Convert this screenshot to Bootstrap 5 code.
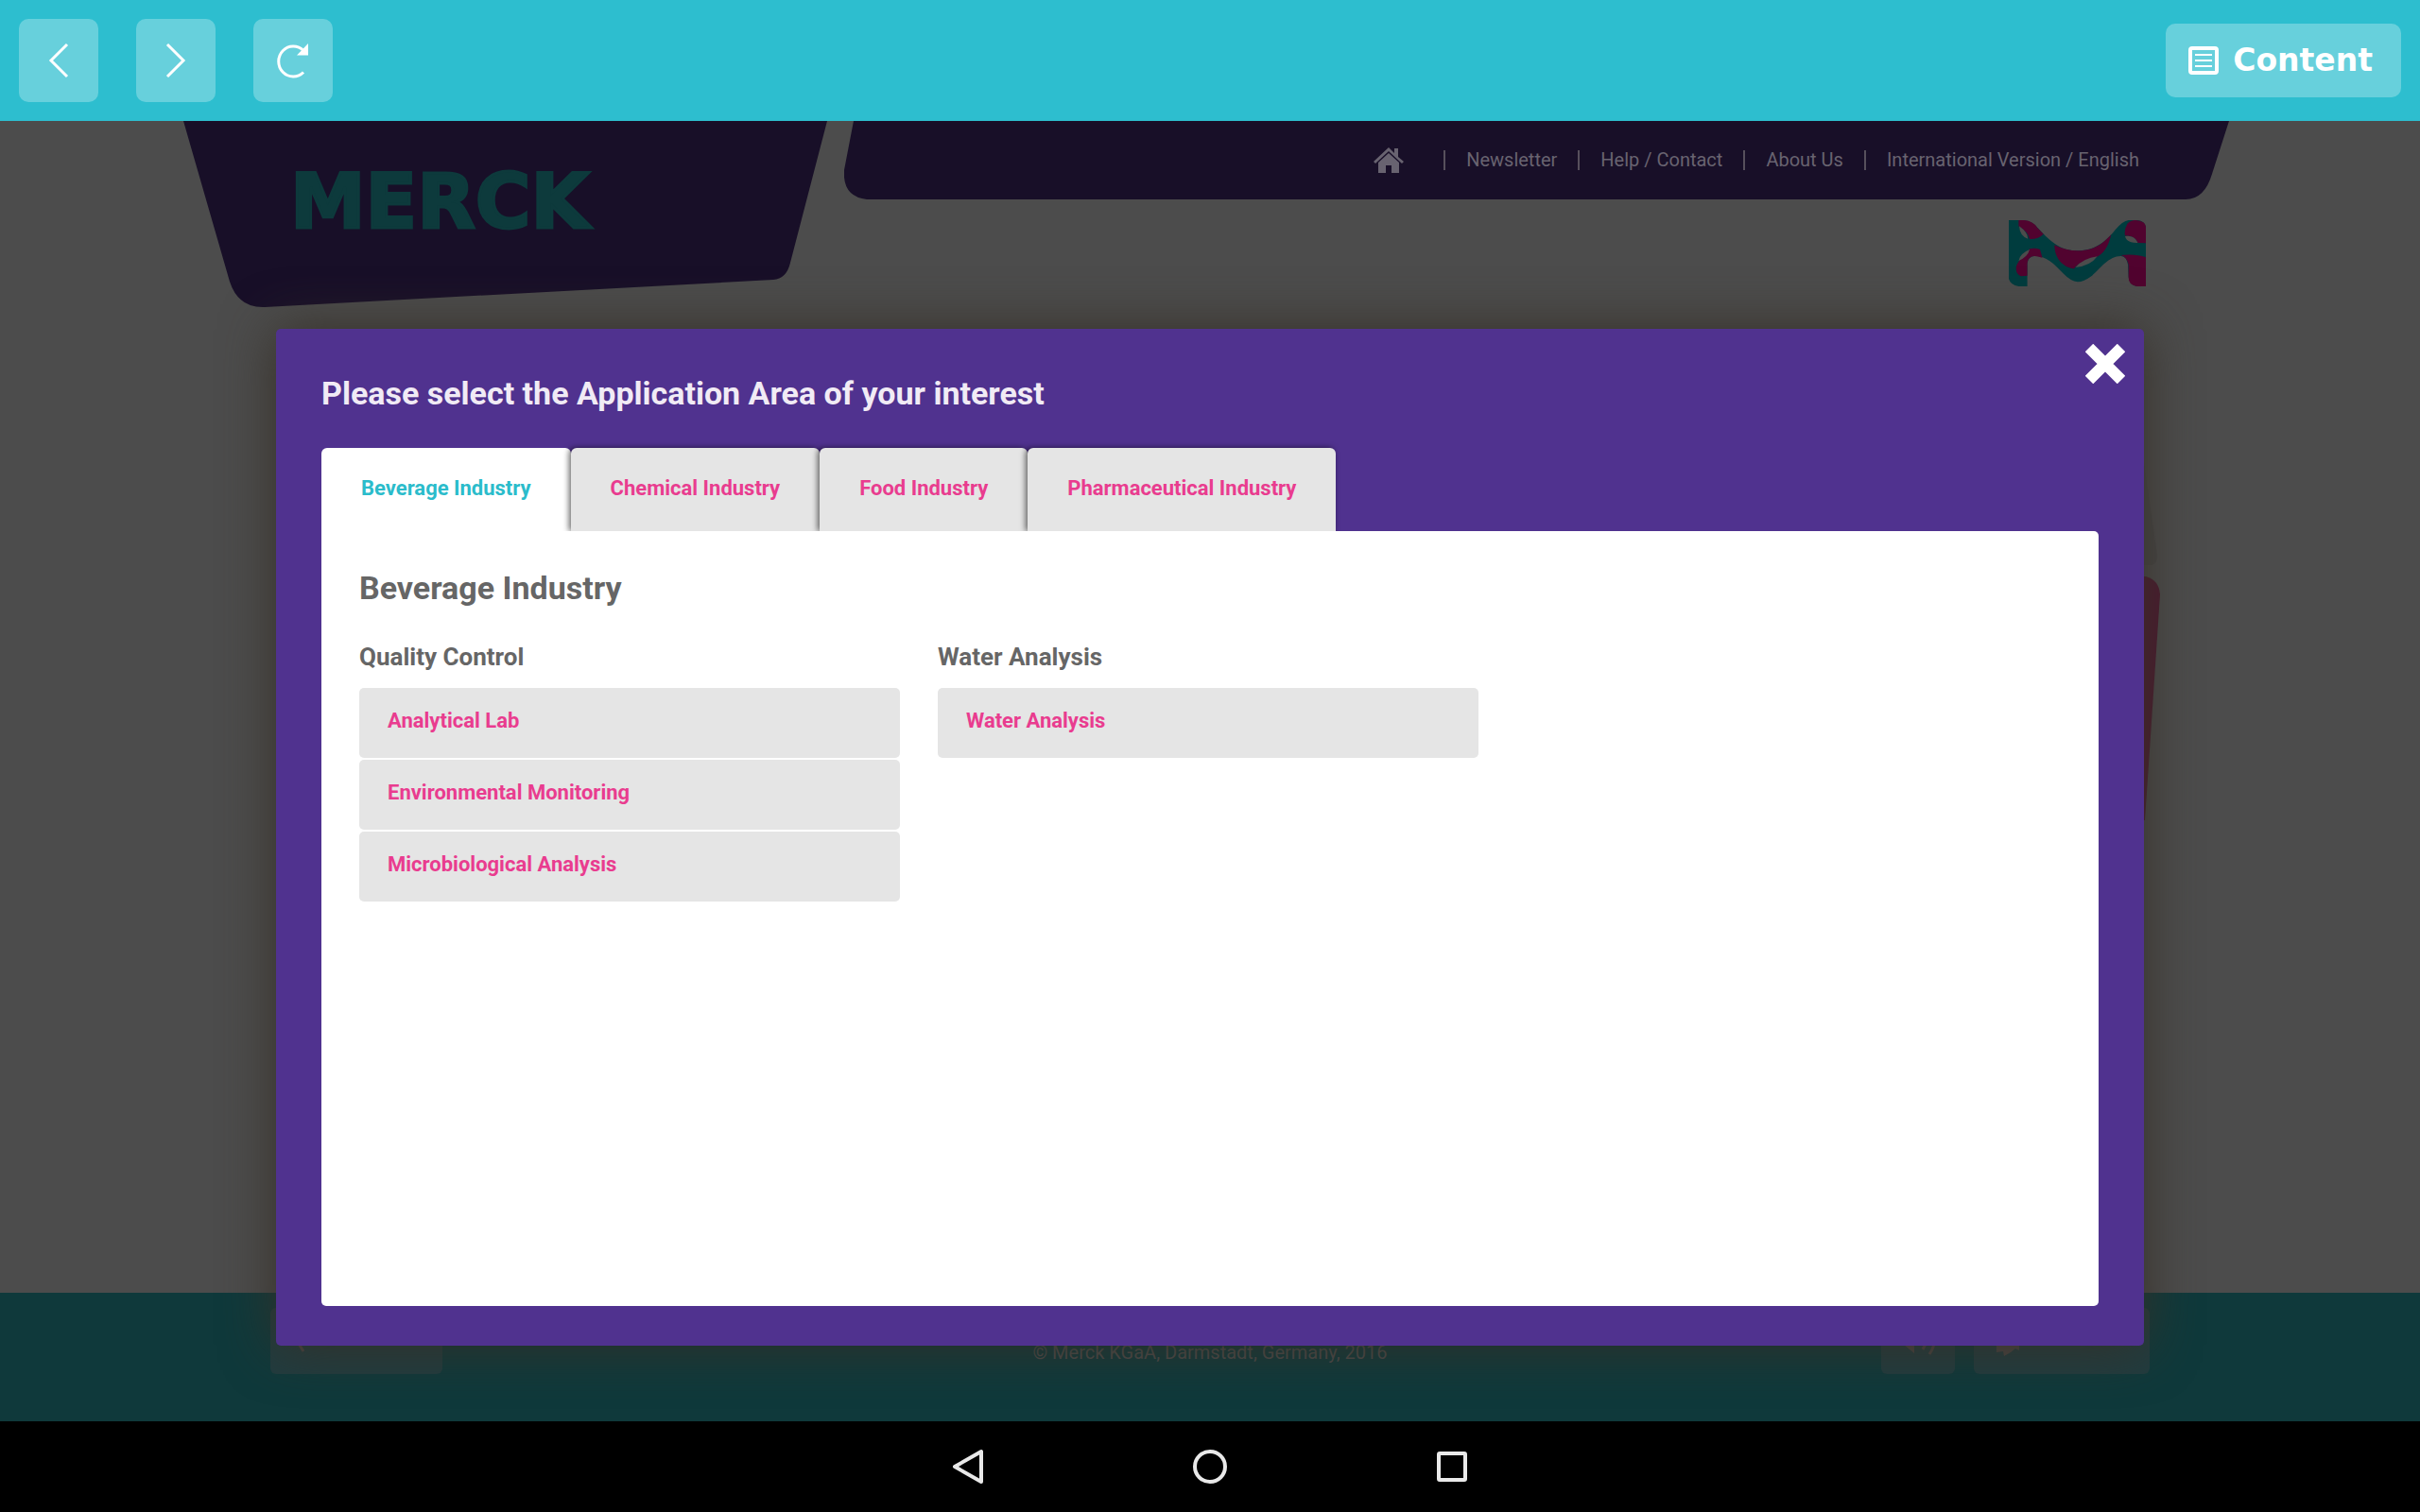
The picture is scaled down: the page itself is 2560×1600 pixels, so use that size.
<!DOCTYPE html>
<html lang="en">
<head>
<meta charset="utf-8">
<meta name="viewport" content="width=device-width, initial-scale=1">
<title>Merck – Application Areas</title>
<link href="https://cdn.jsdelivr.net/npm/bootstrap@5.3.0/dist/css/bootstrap.min.css" rel="stylesheet">
<script src="https://cdn.jsdelivr.net/npm/bootstrap@5.3.0/dist/js/bootstrap.bundle.min.js"></script>
<style>
  body { font-family: Roboto, "Liberation Sans", sans-serif; font-size: 22px; line-height: 36px; background: #4c4c4c; }
  svg { display: block; }
  .kiosk-bar { background: #2dbecf; height: 128px; padding: 0 20px; }
  .kiosk-btn, .kiosk-btn:hover { background: #67d0dc; border: 0; border-radius: 10px; color: #fff; }
  .kiosk-square { width: 84px; height: 88px; padding: 0; }
  .kiosk-content { font-family: "DejaVu Sans", sans-serif; font-weight: 700; font-size: 33px; height: 78px; padding: 0 30px 0 24px; gap: 15px; }
  .stage { overflow: hidden; background: #4c4c4c; }
  .site-head { max-width: 2172px; padding-right: 8px; gap: 17px; }
  .brand-box { width: 682px; height: 198px; }
  .brand-box svg, .menu-box > svg { position: absolute; inset: 0; width: 100%; height: 100%; }
  .brand-name { font: 700 80px/76px "DejaVu Sans", sans-serif; color: #0d3a3c; padding: 48px 0 0 113px; -webkit-text-stroke: 3px #0d3a3c; }
  .menu-box { height: 84px; }
  .menu-list { padding: 0 95px 2px 0; font-size: 20px; }
  .menu-list a { color: #686370; text-decoration: none; }
  .menu-list li + li { border-left: 2px solid #57505c; margin-left: 22px; padding-left: 22px; line-height: 21px; }
  .menu-list li:first-child { margin-right: 20px; }
  .mark-row { max-width: 1980px; margin-top: -93px; }
  .backdrop-art { position: absolute; top: 340px; right: 274px; }
  .site-foot { background: #0f393b; height: 136px; padding-top: 16px; }
  .foot-inner { max-width: 1988px; }
  .foot-note { font-size: 20px; line-height: 32px; color: #4c4c4c; padding-bottom: 7px; }
  .foot-btn, .foot-btn:hover { background: #213c3f; border: 0; border-radius: 6px; height: 70px; color: #4a4443; padding: 0 24px; }
  .picker-layer { position: absolute; inset: 0; padding: 220px 16px 80px; }
  .picker { width: 100%; max-width: 1976px; background: #50328f; border-radius: 5px; padding: 46px 48px 42px; box-shadow: 0 0 56px rgb(54,48,40); }
  .picker-title { font-size: 34px; line-height: 44px; font-weight: 700; color: #f1ebf5; margin-bottom: 36px; }
  .picker-close, .picker-close:hover { position: absolute; top: 16px; right: 20px; padding: 0; border: 0; }
  .picker-tabs { border: 0; }
  .picker-tabs .nav-link, .picker-tabs .nav-link:hover { border: 0; margin: 0; border-radius: 6px 6px 0 0; padding: 25px 42px 27px; font-weight: 700; color: #e93c8f; background: #e5e5e5; box-shadow: -2px 0 6px rgba(0,0,0,.6); }
  .picker-tabs .nav-link.active { color: #2bbccb; background: #fff; box-shadow: none; }
  .picker-panel { z-index: 1; background: #fff; border-radius: 0 5px 5px 5px; padding: 37px 44px 40px 40px; color: #666; }
  .picker-panel h2 { font-size: 34px; line-height: 46px; font-weight: 700; margin-bottom: 32px; }
  .picker-panel h3 { font-size: 26px; line-height: 36px; font-weight: 700; margin-bottom: 15px; }
  .area-row { --bs-gutter-x: 40px; }
  .area-list { gap: 2px; }
  .area-link, .area-link:hover { background: #e5e5e5; color: #e93c8f; font-weight: 700; border-radius: 5px; padding: 17px 30px 21px; text-decoration: none; }
  .system-bar { height: 96px; gap: 208px; background: #000; }
  .system-bar .btn { width: 48px; height: 48px; padding: 0; border: 0; color: #e9e9e9; }
</style>
</head>
<body class="d-flex flex-column min-vh-100">

<header class="kiosk-bar d-flex align-items-center justify-content-between">
  <div class="d-flex" style="gap:40px">
    <button class="btn kiosk-btn kiosk-square" type="button" aria-label="Back">
      <svg width="84" height="88" fill="none" stroke="#fff" stroke-width="3"><path d="M51 27 34 44 51 61"/></svg>
    </button>
    <button class="btn kiosk-btn kiosk-square" type="button" aria-label="Forward">
      <svg width="84" height="88" fill="none" stroke="#fff" stroke-width="3"><path d="M33 27 50 44 33 61"/></svg>
    </button>
    <button class="btn kiosk-btn kiosk-square" type="button" aria-label="Reload">
      <svg width="84" height="88"><path d="M53 33.500A15.500 16 0 1 0 53 56.500" fill="none" stroke="#fff" stroke-width="3"/><path d="M58 26V38.500H46z" fill="#fff"/></svg>
    </button>
  </div>
  <button class="btn kiosk-btn kiosk-content d-flex align-items-center" type="button">
    <svg width="32" height="30" fill="none" stroke="#fff"><rect x="2" y="2" width="28" height="26" rx="2" stroke-width="4"/><path d="M7 9H25M7 15H25M7 21H25" stroke-width="2"/></svg>
    Content
  </button>
</header>

<main class="stage position-relative flex-grow-1 d-flex flex-column">
  <div class="site-head d-flex align-items-start w-100 mx-auto">
    <div class="brand-box position-relative flex-shrink-0">
      <svg viewBox="0 0 682 198" aria-hidden="true"><path d="M0 0H681L642 150Q638 167 624 168L86 197Q58 198 49 170Z" fill="#180f28"/></svg>
      <div class="brand-name position-relative">MERCK</div>
    </div>
    <nav class="menu-box position-relative flex-grow-1" aria-label="Site">
      <svg viewBox="0 0 1466 84" preserveAspectRatio="none" aria-hidden="true"><path d="M10 0H1466L1448 56Q1440 83 1420 83H24Q-2 80 0 52Z" fill="#180f28"/></svg>
      <ul class="menu-list list-unstyled position-relative d-flex align-items-center justify-content-end h-100 mb-0">
        <li><a href="#" aria-label="Home"><svg width="32" height="27" viewBox="0 0 32 27" fill="#686370"><path d="M16 0 22 6V1H26V10L32 15 30 17 16 4 2 17 0 15Z"/><path d="M16 6 27 16V27H19V19H13V27H5V16Z"/></svg></a></li>
        <li><a href="#">Newsletter</a></li>
        <li><a href="#">Help / Contact</a></li>
        <li><a href="#">About Us</a></li>
        <li><a href="#">International Version / English</a></li>
      </ul>
    </nav>
  </div>
  <div class="mark-row w-100 mx-auto d-flex justify-content-end">
    <svg width="145" height="70" viewBox="1151 339 237 210" preserveAspectRatio="none" role="img" aria-label="M">
      <path fill="#003c3e" d="M1151 339H1175Q1192 341 1202 365C1225 410 1240 436 1270 436C1300 436 1320 405 1335 370Q1348 341 1358 339H1374Q1386 342 1388 360V549H1372Q1360 545 1358 520L1357 480Q1355 455 1345 453C1325 452 1310 490 1295 515Q1280 535 1270 535Q1258 533 1245 508C1230 478 1215 452 1196 452Q1184 455 1183 475V549H1168Q1154 545 1151 525Z"/>
      <path fill="#51032f" d="M1168 339H1178Q1193 342 1200 362L1211 383Q1202 400 1187 399Q1184 375 1168 358ZM1230 418Q1250 436 1270 436C1295 436 1312 418 1328 385Q1320 450 1296 460C1280 470 1268 480 1264 493C1245 490 1230 460 1230 418ZM1187 430Q1196 425 1205 432L1209 458Q1196 450 1190 455Q1183 460 1183 480V515L1172 517Q1162 510 1164 485Q1168 465 1178 452ZM1356 350Q1362 339 1370 339Q1388 342 1388 360V412L1374 411Q1370 388 1352 388Q1350 370 1356 350ZM1345 450Q1370 445 1388 457V549H1372Q1358 545 1358 520V480Q1355 455 1345 450Z"/>
      <path fill="#4c4c4c" d="M1169 358Q1184 378 1184 398Q1170 390 1169 358ZM1352 390Q1368 385 1374 411Q1355 412 1352 390ZM1187 432Q1184 455 1168 468Q1170 445 1187 432ZM1304 454Q1292 485 1266 489Q1280 460 1304 454Z"/>
    </svg>
  </div>
  <svg class="backdrop-art" width="60" height="420" aria-hidden="true">
    <path d="M0 0H39L56 120Q56 128 50 130H0Z" fill="#474747"/>
    <path d="M0 142H44Q58 146 59 161L43 400H0Z" fill="#4b182f"/>
  </svg>

  <footer class="site-foot mt-auto">
    <div class="foot-inner mx-auto row g-0 align-items-end">
      <div class="col d-flex">
        <button class="btn foot-btn" type="button" aria-label="Previous" style="width:182px">
          <svg width="14" height="32" fill="none" stroke="currentColor" stroke-width="3"><path d="M12 2 3 14 11 27"/></svg>
        </button>
      </div>
      <div class="col-auto foot-note">© Merck KGaA, Darmstadt, Germany, 2016</div>
      <div class="col d-flex justify-content-end" style="gap:20px">
        <button class="btn foot-btn p-0" type="button" aria-label="Sound" style="width:78px">
          <svg class="mx-auto" width="46" height="36" fill="currentColor"><path d="M0 10H8L19 0V31L8 22H0Z"/><path d="M28 27Q34 18 29 8M35 32Q45 18 36 4" fill="none" stroke="currentColor" stroke-width="3"/></svg>
        </button>
        <button class="btn foot-btn" type="button" aria-label="Feedback" style="width:186px">
          <svg width="24" height="32" fill="currentColor"><path d="M0 4H24V26L20 24 15 28 8 32 7 27 0 28Z"/></svg>
        </button>
      </div>
    </div>
  </footer>

  <div class="picker-layer d-flex justify-content-center">
    <section class="picker position-relative d-flex flex-column" role="dialog" aria-labelledby="picker-title">
      <button class="btn picker-close" type="button" aria-label="Close">
        <svg width="42" height="42" stroke="#fff" stroke-width="12"><path d="M4 4 38 38M38 4 4 38"/></svg>
      </button>
      <h1 class="picker-title" id="picker-title">Please select the Application Area of your interest</h1>
      <ul class="nav nav-tabs picker-tabs" role="tablist">
        <li class="nav-item"><button class="nav-link active" type="button" role="tab" aria-selected="true">Beverage Industry</button></li>
        <li class="nav-item"><button class="nav-link" type="button" role="tab">Chemical Industry</button></li>
        <li class="nav-item"><button class="nav-link" type="button" role="tab">Food Industry</button></li>
        <li class="nav-item"><button class="nav-link" type="button" role="tab">Pharmaceutical Industry</button></li>
      </ul>
      <div class="picker-panel position-relative flex-grow-1" role="tabpanel">
        <h2 class="mt-0">Beverage Industry</h2>
        <div class="row area-row">
          <div class="col-4">
            <h3>Quality Control</h3>
            <div class="area-list d-flex flex-column">
              <a class="area-link" href="#">Analytical Lab</a>
              <a class="area-link" href="#">Environmental Monitoring</a>
              <a class="area-link" href="#">Microbiological Analysis</a>
            </div>
          </div>
          <div class="col-4">
            <h3>Water Analysis</h3>
            <div class="area-list d-flex flex-column">
              <a class="area-link" href="#">Water Analysis</a>
            </div>
          </div>
        </div>
      </div>
    </section>
  </div>
</main>

<nav class="system-bar d-flex align-items-center justify-content-center" aria-label="System">
  <button class="btn" type="button" aria-label="Back"><svg width="48" height="48" fill="none" stroke="currentColor" stroke-width="4" stroke-linejoin="round"><path d="M38 8V40L10 24Z"/></svg></button>
  <button class="btn" type="button" aria-label="Home"><svg width="48" height="48" fill="none" stroke="currentColor" stroke-width="4"><circle cx="24" cy="24" r="16"/></svg></button>
  <button class="btn" type="button" aria-label="Recent apps"><svg width="48" height="48" fill="none" stroke="currentColor" stroke-width="4"><rect x="10" y="10" width="28" height="28" rx="1"/></svg></button>
</nav>
</body>
</html>
